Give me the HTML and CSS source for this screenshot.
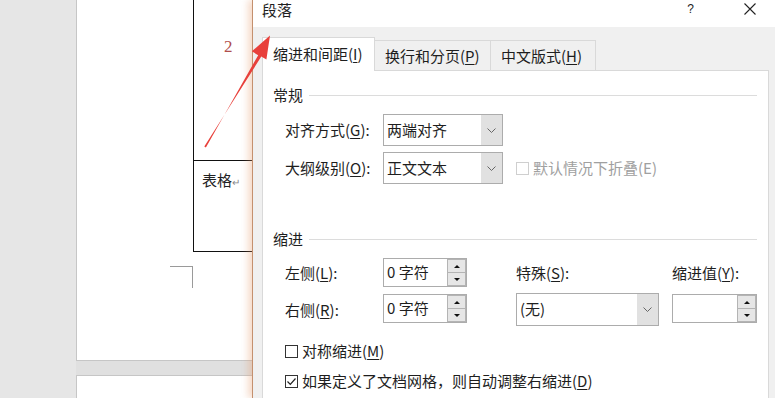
FILE: index.html
```html
<!DOCTYPE html>
<html lang="zh-CN">
<head>
<meta charset="utf-8">
<title>段落</title>
<link rel="stylesheet" href="styles.css">
</head>
<body>
<div class="screen">
  <div class="gutter"></div>
  <div class="doc">
    <div class="page">
      <div class="table">
        <div class="cell cell-top"><span class="num">2</span></div>
        <div class="cell cell-bottom">表格<span class="ret">↵</span></div>
      </div>
      <div class="corner"></div>
    </div>
    <div class="page-gap"></div>
    <div class="page-next"></div>
  </div>
  <div class="dialog">
    <div class="titlebar">
      <span class="title">段落</span>
      <span class="help">?</span>
      <svg class="close" width="12" height="12" viewBox="0 0 12 12"><path d="M0.5 0.5 L11.5 11.5 M11.5 0.5 L0.5 11.5" stroke="#222" stroke-width="1.1" fill="none"/></svg>
    </div>
    <div class="body">
      <div class="tabs">
        <div class="tab active">缩进和间距(<u>I</u>)</div>
        <div class="tab t2">换行和分页(<u>P</u>)</div>
        <div class="tab t3">中文版式(<u>H</u>)</div>
      </div>
      <div class="panel">
        <div class="group-head"><span>常规</span><i class="rule"></i></div>
        <div class="row first">
          <span class="label">对齐方式(<u>G</u>):</span>
          <div class="select"><span class="val">两端对齐</span><span class="drop"><svg width="9" height="5" viewBox="0 0 9 5"><path d="M0.5 0.5 L4.5 4.5 L8.5 0.5" stroke="#666" stroke-width="1" fill="none"/></svg></span></div>
        </div>
        <div class="row second">
          <span class="label">大纲级别(<u>O</u>):</span>
          <div class="select"><span class="val">正文文本</span><span class="drop"><svg width="9" height="5" viewBox="0 0 9 5"><path d="M0.5 0.5 L4.5 4.5 L8.5 0.5" stroke="#666" stroke-width="1" fill="none"/></svg></span></div>
          <span class="check disabled"><span class="box"></span>默认情况下折叠(E)</span>
        </div>
        <div class="group-head indent-head"><span>缩进</span><i class="rule"></i></div>
        <div class="grid">
          <span class="label">左侧(<u>L</u>):</span>
          <div class="spin"><span class="val">0 字符</span><span class="btns"><span class="b up"></span><span class="b down"></span></span></div>
          <span></span>
          <span class="label">特殊(<u>S</u>):</span>
          <span></span>
          <span class="label">缩进值(<u>Y</u>):</span>
          <span class="label">右侧(<u>R</u>):</span>
          <div class="spin low"><span class="val">0 字符</span><span class="btns"><span class="b up"></span><span class="b down"></span></span></div>
          <span></span>
          <div class="select tall"><span class="val">(无)</span><span class="drop"><svg width="9" height="5" viewBox="0 0 9 5"><path d="M0.5 0.5 L4.5 4.5 L8.5 0.5" stroke="#666" stroke-width="1" fill="none"/></svg></span></div>
          <span></span>
          <div class="spin low"><span class="val"></span><span class="btns"><span class="b up"></span><span class="b down"></span></span></div>
        </div>
        <div class="check c1"><span class="box"></span>对称缩进(<u>M</u>)</div>
        <div class="check c2"><span class="box"><svg width="11" height="11" viewBox="0 0 11 11"><path d="M1.5 5.5 L4.3 8.3 L9.5 2.5" stroke="#222" stroke-width="1.2" fill="none"/></svg></span>如果定义了文档网格，则自动调整右缩进(<u>D</u>)</div>
      </div>
    </div>
  </div>
  <svg class="arrow" width="775" height="398" viewBox="0 0 775 398">
    <polygon points="204.3,146.6 205.9,147.5 258.2,55.2 251.8,51.3 270,35.5 266.4,59.5 261.3,56.5" fill="#e8403b"/>
  </svg>
</div>
</body>
</html>
```

FILE: styles.css
```css
* { box-sizing: border-box; }
html, body { margin: 0; padding: 0; }
body {
  width: 775px;
  height: 398px;
  overflow: hidden;
  font-family: "Noto Sans CJK SC", "Microsoft YaHei", sans-serif;
  font-size: 15px;
  color: #1e1e1e;
}
u { text-decoration: underline; text-underline-offset: 2px; }

.screen {
  position: relative;
  display: flex;
  width: 775px;
  height: 398px;
  overflow: hidden;
  background: #e6e6e6;
}
.gutter { width: 76px; flex: none; }
.doc { width: 176px; flex: none; display: flex; flex-direction: column; }
.page {
  height: 361px;
  background: #fff;
  border-left: 1px solid #c6c6c6;
  border-bottom: 1px solid #c6c6c6;
  flex: none;
}
.page-gap { height: 14px; flex: none; background: #e0e0e0; }
.page-next { flex: 1; background: #fff; border-left: 1px solid #c6c6c6; border-top: 1px solid #c6c6c6; }

.table { margin-left: 116px; border-left: 1.5px solid #111; }
.cell-top { height: 161px; border-bottom: 1.5px solid #111; padding: 35px 0 0 30px; }
.num {
  font-family: "Liberation Serif", serif;
  font-size: 17px;
  line-height: 20px;
  color: #b04f4c;
}
.cell-bottom { height: 91px; border-bottom: 1.5px solid #111; padding: 9px 0 0 8px; line-height: 20px; font-size: 15px; color: #222; }
.ret { font-size: 10px; color: #888; }
.corner {
  margin: 14px 0 0 93px;
  width: 23px;
  height: 22px;
  border-top: 1px solid #9a9a9a;
  border-right: 1px solid #9a9a9a;
}

.dialog {
  flex: 1;
  display: flex;
  flex-direction: column;
  background: #f0f0f0;
  border-left: 1px solid #c4906e;
  box-shadow: -4px 0 7px rgba(225, 150, 100, 0.35);
  position: relative;
  z-index: 1;
}
.titlebar {
  height: 27px;
  background: #fff;
  display: flex;
  align-items: flex-start;
  padding-left: 9px;
  line-height: 20px;
  flex: none;
}
.title { font-size: 15px; }
.help { margin-left: auto; font-family: "Liberation Sans", sans-serif; font-size: 12px; line-height: 14px; margin-top: 2px; color: #222; }
.close { margin: 3px 21px 0 50px; }

.body { flex: 1; padding: 10px 8px 0 9px; display: flex; flex-direction: column; }
.tabs { display: flex; align-items: flex-end; height: 34px; margin-bottom: -1px; position: relative; z-index: 2; }
.tab {
  height: 31px;
  line-height: 29px;
  padding: 0 0 0 10px;
  border: 1px solid #d9d9d9;
  border-left: none;
  background: #f0f0f0;
  white-space: nowrap;
  overflow: hidden;
  flex: none;
}
.tab.active {
  height: 34px;
  line-height: 32px;
  background: #fff;
  border-left: 1px solid #d9d9d9;
  border-bottom: none;
  width: 113px;
}
.tab.t2 { width: 116px; }
.tab.t3 { width: 105px; }

.panel {
  flex: 1;
  background: #fff;
  border: 1px solid #d9d9d9;
  border-bottom: none;
  padding: 14px 11px 0 10px;
}
.group-head { display: flex; align-items: center; height: 20px; line-height: 20px; }
.group-head .rule { flex: 1; height: 1px; background: #dcdcdc; margin-left: 6px; }
.indent-head { margin-top: 45px; }

.row { display: flex; align-items: center; height: 32px; margin-left: 12px; }
.row.first { margin-top: 9px; }
.row.second { margin-top: 6px; }
.label { width: 98px; flex: none; line-height: 20px; white-space: nowrap; align-self: center; }

.select {
  width: 120px;
  height: 32px;
  border: 1px solid #acacac;
  background: #fff;
  display: flex;
  flex: none;
}
.select .val { flex: 1; padding-left: 3px; line-height: 29px; }
.select .drop {
  width: 21px;
  background: #e1e1e1;
  display: flex;
  align-items: center;
  justify-content: center;
}
.select.tall { width: 143px; height: 33px; }
.select.tall .val { line-height: 30px; }

.check { display: flex; align-items: center; line-height: 20px; white-space: nowrap; }
.check .box {
  width: 13px;
  height: 13px;
  border: 1px solid #333;
  background: #fff;
  margin-right: 4px;
  display: flex;
  align-items: center;
  justify-content: center;
  flex: none;
}
.check.disabled { margin-left: 13px; color: #a0a0a0; }
.check.disabled .box { border-color: #cfcfcf; }
.check.c1 { margin: 15px 0 0 12px; }
.check.c2 { margin: 10px 0 0 12px; }

.grid {
  display: grid;
  grid-template-columns: 98px 84px 49px 143px 13px 85px;
  grid-template-rows: 29px 33px;
  row-gap: 6px;
  margin: 9px 0 0 12px;
}
.spin {
  height: 29px;
  border: 1px solid #acacac;
  background: #fff;
  display: flex;
}
.spin.low { margin-top: 1px; }
.spin .val { flex: 1; padding-left: 3px; line-height: 26px; }
.spin .btns { width: 19px; display: flex; flex-direction: column; }
.spin .b {
  flex: 1;
  background: #e6e6e6;
  border: 1px solid #b4b4b4;
  display: flex;
  align-items: center;
  justify-content: center;
}
.spin .b.down { border-top: none; }
.spin .b.up::after {
  content: "";
  border-left: 3px solid transparent;
  border-right: 3px solid transparent;
  border-bottom: 3px solid #111;
}
.spin .b.down::after {
  content: "";
  border-left: 3px solid transparent;
  border-right: 3px solid transparent;
  border-top: 3px solid #111;
}

.arrow { position: absolute; left: 0; top: 0; z-index: 5; pointer-events: none; }
```
